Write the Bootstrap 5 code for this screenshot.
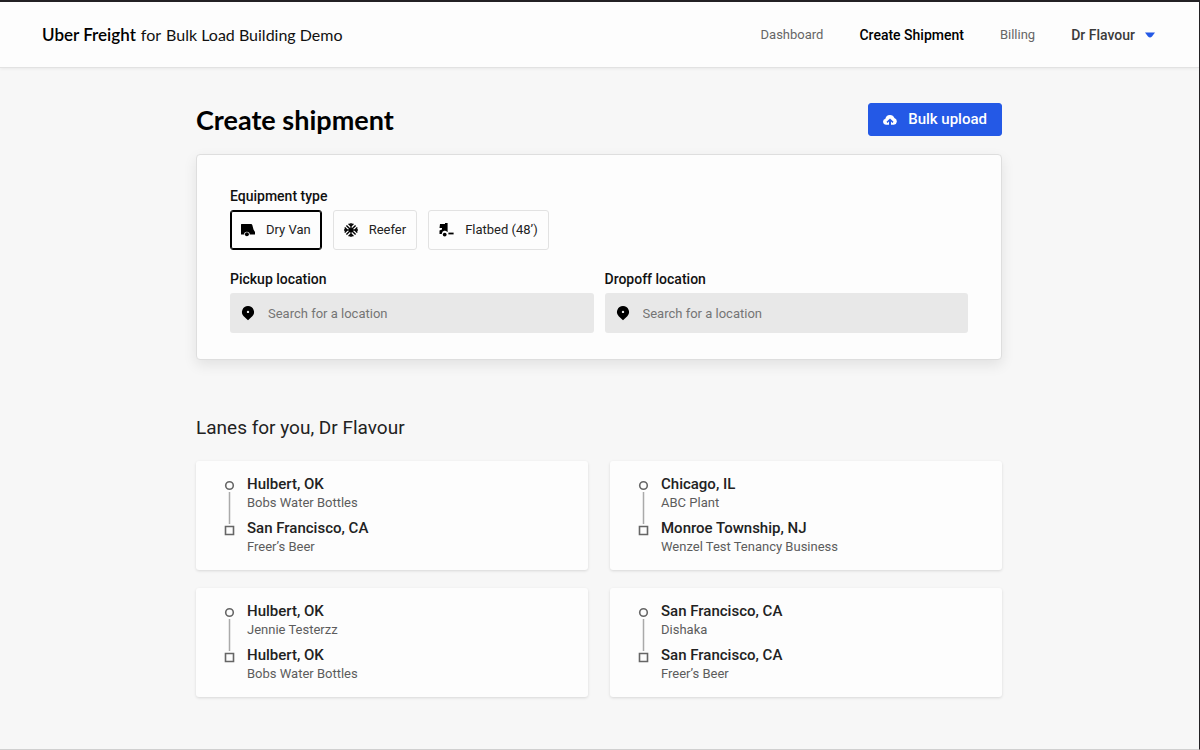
<!DOCTYPE html>
<html lang="en">
<head>
<meta charset="utf-8">
<meta name="viewport" content="width=device-width, initial-scale=1">
<title>Create shipment</title>
<link href="https://cdn.jsdelivr.net/npm/bootstrap@5.3.0/dist/css/bootstrap.min.css" rel="stylesheet">
<style>
  body { font-family: Roboto, sans-serif; font-size: 13px; line-height: 18px; color: #222; background: #f7f7f7;
         border-top: 2px solid #232124; border-right: 1px solid #232124; border-bottom: 1px solid #d0d0d0; }
  .topbar { background: #fdfdfd; border-bottom: 1px solid #e2e2e2; box-shadow: 0 1px 3px rgba(0,0,0,.06); padding: 0 44px 0 42px; min-height: 66px; }
  .brand { font-family: Lato, sans-serif; font-size: 16px; color: #111; gap: 5px; }
  .brand strong { font-size: 17px; font-weight: 600; color: #000; }
  .topnav { gap: 36px; }
  .topnav .nav-link { padding: 0; color: #666; line-height: 20px; }
  .topnav .current, .topnav .user { font-size: 14px; font-weight: 500; color: #000; }
  .topnav .user { color: #3b3b3b; gap: 10px; }
  .page { max-width: 831px; padding: 35px 13px 40px 12px; }
  h1 { font-family: Lato, sans-serif; font-size: 27px; font-weight: 700; line-height: 33px; color: #000; }
  .upload { --bs-btn-bg: #2459e6; --bs-btn-border-color: #2459e6; --bs-btn-color: #fff; --bs-btn-hover-bg: #1c4bc6; --bs-btn-hover-color: #fff;
            --bs-btn-border-radius: 3px; --bs-btn-font-weight: 500; --bs-btn-font-size: 15px; --bs-btn-line-height: 21px;
            --bs-btn-padding-y: 5px; --bs-btn-padding-x: 14px; gap: 11px; }
  .shipment { margin-top: 18px; background: #fdfdfd; border: 1px solid #dedede; border-radius: 4px; padding: 32px 33px 26px; box-shadow: 0 5px 14px rgba(0,0,0,.09); }
  .field-name { display: block; font-size: 14px; font-weight: 500; line-height: 18px; margin-bottom: 5px; color: #111; float: none; }
  .choices { gap: 11px; }
  .choice { --bs-btn-font-size: 13px; --bs-btn-line-height: 20px; --bs-btn-padding-y: 9px; --bs-btn-padding-x: 10px; --bs-btn-border-radius: 3px;
            --bs-btn-border-color: #e2e2e2; --bs-btn-color: #222; --bs-btn-active-color: #222; --bs-btn-active-bg: #fdfdfd; --bs-btn-active-border-color: #000; gap: 11px; }
  .btn-check:checked + .choice { box-shadow: inset 0 0 0 1px #000; }
  .places { margin-top: 20px; --bs-gutter-x: 11px; }
  .place { background: #e8e8e8; border-radius: 3px; padding: 0 10px; gap: 12px; }
  .place .form-control { background: none; border: 0; padding: 0; height: 40px; font-size: 13px; box-shadow: none; }
  .place .form-control::placeholder { color: #757575; }
  h2 { font-size: 19px; font-weight: 400; line-height: 24px; margin: 56px 0 21px; color: #222; }
  .lanes { --bs-gutter-x: 22px; --bs-gutter-y: 18px; }
  .lane { background: #fdfdfd; border-radius: 3px; padding: 13px 28px 14px; gap: 12px; box-shadow: 0 1px 3px rgba(0,0,0,.13); }
  .stops { gap: 6px; }
  .city { font-size: 15px; font-weight: 500; line-height: 20px; color: #222; }
  .company { color: #5c5c5c; }
</style>
</head>
<body class="min-vh-100">
<header class="topbar d-flex flex-wrap align-items-center justify-content-between">
  <a href="#" class="brand d-flex align-items-baseline text-decoration-none"><strong>Uber Freight</strong><span>for</span><span>Bulk Load Building Demo</span></a>
  <nav class="topnav nav align-items-center" aria-label="Main">
    <a class="nav-link" href="#">Dashboard</a>
    <a class="nav-link current" href="#" aria-current="page">Create Shipment</a>
    <a class="nav-link" href="#">Billing</a>
    <button class="nav-link user btn border-0 d-flex align-items-center" type="button">Dr Flavour
      <svg width="10" height="6" viewBox="0 0 10 6" aria-hidden="true"><path d="M0 0.5h10L7 4.6Q5 6.4 3 4.6z" fill="#2459e6"/></svg>
    </button>
  </nav>
</header>

<main class="page container">
  <div class="d-flex justify-content-between align-items-center">
    <h1 class="m-0">Create shipment</h1>
    <button type="button" class="btn upload d-flex align-items-center">
      <svg width="14" height="12" viewBox="0 0 14 12" aria-hidden="true"><path d="M3.2 10.8A3.1 3.1 0 0 1 2.4 4.7 4.7 4.7 0 0 1 11.4 4 3.5 3.5 0 0 1 10.8 10.8H8V7.6l1.500 1.400 1-1.200L7 4.6 3.5 7.8l1 1.200L6 7.6v3.200z" fill="#fff"/></svg>
      Bulk upload
    </button>
  </div>

  <form class="shipment">
    <fieldset>
      <legend class="field-name">Equipment type</legend>
      <div class="choices d-flex flex-wrap">
        <input type="radio" class="btn-check" name="equipment" id="dryvan" checked>
        <label class="btn choice d-flex align-items-center" for="dryvan">
          <svg width="14" height="14" viewBox="0 0 14 14" aria-hidden="true"><path d="M0 1.500Q0 1 .5 1H10Q11 1 11.300 2L12.500 6.500 14 9V11.500H8.700A2.800 2.800 0 1 0 3.100 11.500H0z" fill="#000"/><circle cx="5.900" cy="11.200" r="2" fill="#000"/></svg>
          Dry Van</label>
        <input type="radio" class="btn-check" name="equipment" id="reefer">
        <label class="btn choice d-flex align-items-center" for="reefer">
          <svg width="14" height="14" viewBox="0 0 14 14" fill="none" stroke="#000" stroke-width="1.4" aria-hidden="true"><path d="M7 0v14M0 7h14M2.400 2.400l9.200 9.200M11.600 2.400l-9.200 9.200M4.600 .7L7 3.100 9.400 .7M4.600 13.300L7 10.900l2.400 2.400M.7 4.600L3.100 7 .7 9.400M13.300 4.600L10.900 7l2.400 2.400"/></svg>
          Reefer</label>
        <input type="radio" class="btn-check" name="equipment" id="flatbed">
        <label class="btn choice d-flex align-items-center" for="flatbed">
          <svg width="15" height="14" viewBox="0 0 15 14" aria-hidden="true"><path d="M1 1H6V0H8.600V9H8.200A2.900 2.900 0 0 0 2.900 10.500L2.600 11H.5V7.500L3 6.500V5H.5z" fill="#000"/><circle cx="5.700" cy="11.600" r="1.900" fill="#000"/><path d="M9.400 9.600h5.200v1.800H9.400z" fill="#000"/></svg>
          Flatbed (48’)</label>
      </div>
    </fieldset>
    <div class="places row">
      <div class="col-sm-6">
        <label class="field-name" for="pickup">Pickup location</label>
        <div class="place d-flex align-items-center">
          <svg class="flex-shrink-0" width="16" height="16" viewBox="0 0 16 16" aria-hidden="true"><path fill-rule="evenodd" d="M8 1a6 6 0 0 1 4.300 10.200L8 15.200l-4.300-4A6 6 0 0 1 8 1zm0 4.700a1.200 1.200 0 1 0 0 2.400 1.200 1.200 0 0 0 0-2.400z" fill="#000"/></svg>
          <input class="form-control" type="text" id="pickup" placeholder="Search for a location">
        </div>
      </div>
      <div class="col-sm-6">
        <label class="field-name" for="dropoff">Dropoff location</label>
        <div class="place d-flex align-items-center">
          <svg class="flex-shrink-0" width="16" height="16" viewBox="0 0 16 16" aria-hidden="true"><path fill-rule="evenodd" d="M8 1a6 6 0 0 1 4.300 10.200L8 15.200l-4.300-4A6 6 0 0 1 8 1zm0 4.700a1.200 1.200 0 1 0 0 2.400 1.200 1.200 0 0 0 0-2.400z" fill="#000"/></svg>
          <input class="form-control" type="text" id="dropoff" placeholder="Search for a location">
        </div>
      </div>
    </div>
  </form>

  <h2>Lanes for you, Dr Flavour</h2>
  <svg class="d-none" aria-hidden="true"><symbol id="route" viewBox="0 0 11 82"><circle cx="5.500" cy="11.500" r="3.800" fill="none" stroke="#666" stroke-width="1.600"/><path d="M5.500 18v32" stroke="#aaa" stroke-width="1.500"/><path d="M1.500 52.500h8v8h-8z" fill="none" stroke="#666" stroke-width="1.600"/></symbol></svg>
  <div class="lanes row">
    <div class="col-sm-6"><div class="lane d-flex">
      <svg class="flex-shrink-0" width="11" height="82" aria-hidden="true"><use href="#route"/></svg>
      <div class="stops d-flex flex-column">
        <div><div class="city">Hulbert, OK</div><div class="company">Bobs Water Bottles</div></div>
        <div><div class="city">San Francisco, CA</div><div class="company">Freer’s Beer</div></div>
      </div></div></div>
    <div class="col-sm-6"><div class="lane d-flex">
      <svg class="flex-shrink-0" width="11" height="82" aria-hidden="true"><use href="#route"/></svg>
      <div class="stops d-flex flex-column">
        <div><div class="city">Chicago, IL</div><div class="company">ABC Plant</div></div>
        <div><div class="city">Monroe Township, NJ</div><div class="company">Wenzel Test Tenancy Business</div></div>
      </div></div></div>
    <div class="col-sm-6"><div class="lane d-flex">
      <svg class="flex-shrink-0" width="11" height="82" aria-hidden="true"><use href="#route"/></svg>
      <div class="stops d-flex flex-column">
        <div><div class="city">Hulbert, OK</div><div class="company">Jennie Testerzz</div></div>
        <div><div class="city">Hulbert, OK</div><div class="company">Bobs Water Bottles</div></div>
      </div></div></div>
    <div class="col-sm-6"><div class="lane d-flex">
      <svg class="flex-shrink-0" width="11" height="82" aria-hidden="true"><use href="#route"/></svg>
      <div class="stops d-flex flex-column">
        <div><div class="city">San Francisco, CA</div><div class="company">Dishaka</div></div>
        <div><div class="city">San Francisco, CA</div><div class="company">Freer’s Beer</div></div>
      </div></div></div>
  </div>
</main>
<script src="https://cdn.jsdelivr.net/npm/bootstrap@5.3.0/dist/js/bootstrap.bundle.min.js"></script>
</body>
</html>
